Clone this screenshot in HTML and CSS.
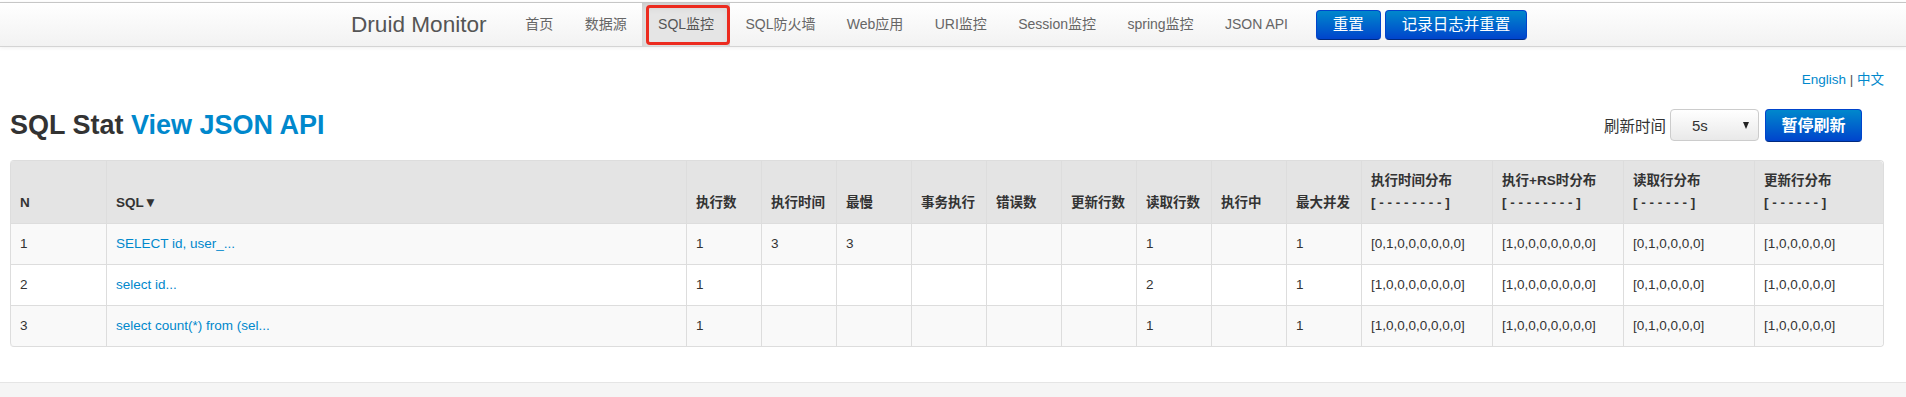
FILE: index.html
```html
<!doctype html>
<html>
<head>
<meta charset="utf-8">
<link rel="stylesheet" href="styles.css">
</head>
<body>
<div class="navbar">
	<div class="navbar-inner">
		<div class="container">
			<a class="brand" href="#">Druid Monitor</a>
			<ul class="nav">
				<li><a href="#">首页</a></li>
				<li><a href="#">数据源</a></li>
				<li class="active"><a href="#">SQL监控</a></li>
				<li><a href="#">SQL防火墙</a></li>
				<li><a href="#">Web应用</a></li>
				<li><a href="#">URI监控</a></li>
				<li><a href="#">Session监控</a></li>
				<li><a href="#">spring监控</a></li>
				<li><a href="#">JSON API</a></li>
			</ul>
			<div class="nav-actions">
				<a class="btn btn-primary" href="#">重置</a>
				<a class="btn btn-primary" href="#">记录日志并重置</a>
			</div>
		</div>
	</div>
</div>

<div class="content">
	<div class="lang"><a href="#">English</a> | <a href="#">中文</a></div>
	<div class="title-row">
		<h3>SQL Stat <a href="#">View JSON API</a></h3>
		<div class="refresh">
			<label>刷新时间</label>
			<div class="select"><span>5s</span><i class="caret"></i></div>
			<a class="btn btn-primary btn-pause" href="#">暂停刷新</a>
		</div>
	</div>

	<table class="stat-table">
		<colgroup>
			<col style="width:96px"><col style="width:580px">
			<col style="width:75px"><col style="width:75px"><col style="width:75px">
			<col style="width:75px"><col style="width:75px"><col style="width:75px">
			<col style="width:75px"><col style="width:75px"><col style="width:75px">
			<col style="width:131px"><col style="width:131px"><col style="width:131px"><col>
		</colgroup>
		<thead>
			<tr>
				<th>N</th>
				<th>SQL▼</th>
				<th>执行数</th>
				<th>执行时间</th>
				<th>最慢</th>
				<th>事务执行</th>
				<th>错误数</th>
				<th>更新行数</th>
				<th>读取行数</th>
				<th>执行中</th>
				<th>最大并发</th>
				<th>执行时间分布<br>[ - - - - - - - - ]</th>
				<th>执行+RS时分布<br>[ - - - - - - - - ]</th>
				<th>读取行分布<br>[ - - - - - - ]</th>
				<th>更新行分布<br>[ - - - - - - ]</th>
			</tr>
		</thead>
		<tbody>
			<tr>
				<td>1</td><td><a href="#">SELECT id, user_...</a></td>
				<td>1</td><td>3</td><td>3</td><td></td><td></td><td></td><td>1</td><td></td><td>1</td>
				<td>[0,1,0,0,0,0,0,0]</td><td>[1,0,0,0,0,0,0,0]</td><td>[0,1,0,0,0,0]</td><td>[1,0,0,0,0,0]</td>
			</tr>
			<tr>
				<td>2</td><td><a href="#">select id...</a></td>
				<td>1</td><td></td><td></td><td></td><td></td><td></td><td>2</td><td></td><td>1</td>
				<td>[1,0,0,0,0,0,0,0]</td><td>[1,0,0,0,0,0,0,0]</td><td>[0,1,0,0,0,0]</td><td>[1,0,0,0,0,0]</td>
			</tr>
			<tr>
				<td>3</td><td><a href="#">select count(*) from (sel...</a></td>
				<td>1</td><td></td><td></td><td></td><td></td><td></td><td>1</td><td></td><td>1</td>
				<td>[1,0,0,0,0,0,0,0]</td><td>[1,0,0,0,0,0,0,0]</td><td>[0,1,0,0,0,0]</td><td>[1,0,0,0,0,0]</td>
			</tr>
		</tbody>
	</table>
</div>

<div class="footer"></div>
</body>
</html>
```

FILE: styles.css
```css
html{
	height:100%;
}
body{
	margin:0px;
	font-family:"Liberation Sans", Arial, "Noto Sans CJK SC", sans-serif;
	font-size:13.5px;
	color:#333;
	background:#fff;
}
a{
	color:#0088cc;
	text-decoration:none;
}

/* top bar */
.navbar{
	margin-top:2px;
}
.navbar-inner{
	height:43px;
	border-top:1px solid #c6c6c6;
	border-bottom:1px solid #d4d4d4;
	background:linear-gradient(to bottom, #ffffff, #f2f2f2);
	box-shadow:0 1px 4px rgba(0,0,0,0.065);
}
.container{
	display:flex;
	height:100%;
	padding-left:331px;
}
.brand{
	padding:0 23px 0 20px;
	font-size:22.6px;
	line-height:43px;
	color:#555;
}
.nav{
	display:flex;
	list-style:none;
	margin:0;
	padding:0;
}
.nav li{
	position:relative;
}
.nav li a{
	display:block;
	padding:0 15.7px;
	font-size:14px;
	line-height:43px;
	color:#666;
}
.nav li.active a{
	background:#e5e5e5;
	color:#555;
	box-shadow:inset 0 3px 8px rgba(0,0,0,0.125);
}
.nav li.active::after{
	content:'';
	position:absolute;
	left:4px;
	right:0px;
	top:2px;
	bottom:1px;
	border:3px solid #ec2b1f;
	border-radius:4px;
	pointer-events:none;
}
.nav-actions{
	display:flex;
	align-items:center;
	gap:4px;
	margin-left:12px;
}

.btn{
	display:inline-block;
	box-sizing:border-box;
	border-radius:4px;
	text-align:center;
}
.btn-primary{
	color:#fff;
	background:linear-gradient(to bottom, #0088cc, #0044cc);
	border:1px solid #0044cc;
	border-bottom-color:#002a80;
}
.nav-actions .btn{
	height:30px;
	line-height:28px;
	padding:0 16px;
	font-size:15.5px;
}

/* page */
.content{
	padding:23px 22px 0 10px;
}
.lang{
	text-align:right;
	line-height:20px;
	font-size:13.5px;
	color:#555;
}
.title-row{
	display:flex;
	align-items:center;
	justify-content:space-between;
	height:36px;
	margin:17px 0 17px 0;
}
h3{
	margin:0;
	font-size:27px;
	line-height:36px;
	font-weight:bold;
	color:#333;
}
.refresh{
	display:flex;
	align-items:center;
	margin-right:22px;
}
.refresh label{
	font-size:15.5px;
	color:#333;
	margin-right:4px;
}
.select{
	box-sizing:border-box;
	width:89px;
	height:32px;
	display:flex;
	align-items:center;
	justify-content:space-between;
	padding:0 9px 0 21px;
	border:1px solid #ccc;
	border-radius:4px;
	background:linear-gradient(to bottom, #ffffff, #e9e9e9);
	font-size:15px;
	color:#333;
}
.caret{
	width:0;
	height:0;
	border-left:3.5px solid transparent;
	border-right:3.5px solid transparent;
	border-top:7px solid #222;
}
.btn-pause{
	margin-left:6px;
	width:97px;
	height:33px;
	line-height:31px;
	font-size:16px;
	font-weight:bold;
}

/* table */
.stat-table{
	width:1874px;
	table-layout:fixed;
	border-collapse:separate;
	border-spacing:0;
	border:1px solid #ddd;
	border-left:0;
	border-radius:4px;
}
.stat-table th, .stat-table td{
	padding:9px 10px 9px 9px;
	line-height:22px;
	text-align:left;
	vertical-align:bottom;
	border-left:1px solid #ddd;
	white-space:nowrap;
	overflow:hidden;
}
.stat-table td{
	border-top:1px solid #ddd;
	vertical-align:top;
}
.stat-table th{
	background:#e4e4e4;
	font-weight:bold;
	font-size:13.5px;
	color:#333;
}
.stat-table thead th:first-child{
	border-top-left-radius:4px;
}
.stat-table thead th:last-child{
	border-top-right-radius:4px;
}
.stat-table tbody tr:nth-child(odd) td{
	background:#f9f9f9;
}
.stat-table tbody tr:last-child td:first-child{
	border-bottom-left-radius:4px;
}
.stat-table tbody tr:last-child td:last-child{
	border-bottom-right-radius:4px;
}

.footer{
	margin-top:35px;
	height:15px;
	border-top:1px solid #e5e5e5;
	background:#f5f5f5;
}
```
